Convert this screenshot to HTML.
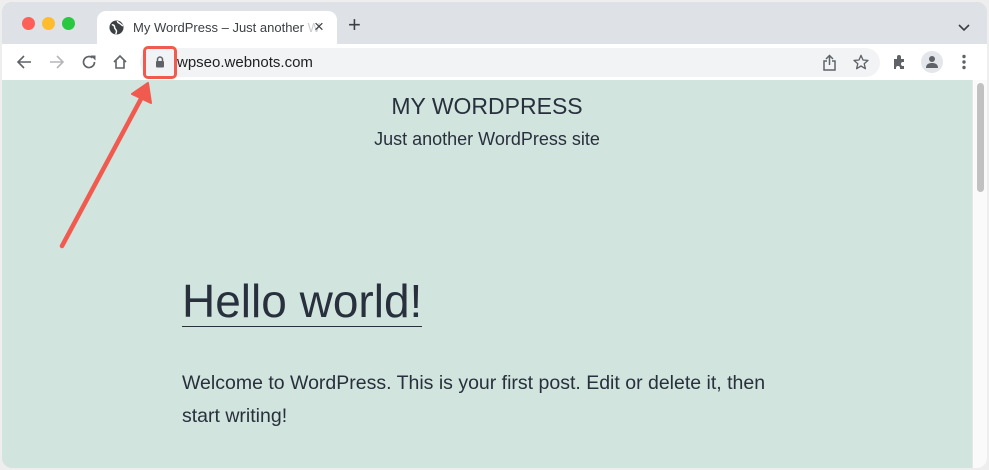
<!DOCTYPE html>
<html><head><meta charset="utf-8"><style>
*{margin:0;padding:0;box-sizing:border-box}
body{width:989px;height:470px;background:#eeeeee;font-family:"Liberation Sans",sans-serif;position:relative;overflow:hidden}
.win{position:absolute;left:2px;top:2px;width:985px;height:466px;border-radius:10px;overflow:hidden;background:#d1e4dd}
.tabbar{position:absolute;left:0;top:0;width:985px;height:42px;background:#dee1e6}
.tab{position:absolute;left:95px;top:9px;width:240px;height:35px;background:#fff;border-radius:9px 9px 0 0}
.dot{position:absolute;top:15px;width:13px;height:13px;border-radius:50%}
.toolbar{position:absolute;left:0;top:42px;width:985px;height:36px;background:#fff}
.omni{position:absolute;left:138px;top:4px;width:740px;height:29px;background:#f1f3f4;border-radius:15px}
.t{position:absolute;white-space:nowrap;color:#28303d}
.sb{position:absolute;left:970px;top:78px;width:15px;height:388px;background:#fafafa;border-left:1px solid #e6e6e6}
.thumb{position:absolute;left:4px;top:3px;width:7px;height:109px;background:#c1c1c1;border-radius:4px}
</style></head><body>
<div class="win">
 <div class="tabbar">
  <div class="dot" style="left:20px;background:#fe5f57"></div>
  <div class="dot" style="left:40px;background:#febc2e"></div>
  <div class="dot" style="left:60px;background:#28c840"></div>
  <div class="tab">
   <svg style="position:absolute;left:12px;top:9px" width="15" height="15" viewBox="0 0 16 16"><circle cx="8" cy="8" r="7.5" fill="#3c4043"/><path d="M3 5c2 0 3 1 3 3s2 2 2 4-1 3-1 3M9 1c0 2 2 2 3 3s2 2 3 2" stroke="#fff" stroke-width="1.6" fill="none"/></svg>
   <div class="t" style="left:36px;top:9px;font-size:13px;color:#3c4043">My WordPress – Just another <span style="color:#ccc">W</span></div>
   <div class="t" style="left:217px;top:6px;font-size:17px;color:#3c4043">×</div>
  </div>
  <div class="t" style="left:346px;top:10px;font-size:22px;color:#3c4043">+</div>
  <svg style="position:absolute;left:956px;top:22px" width="12" height="8" viewBox="0 0 12 8"><path d="M1 1l5 5 5-5" stroke="#3c4043" stroke-width="1.6" fill="none"/></svg>
 </div>
 <div class="toolbar">
  <svg style="position:absolute;left:14px;top:10px" width="16" height="16" viewBox="0 0 16 16"><path d="M15 8H2M8 2L2 8l6 6" stroke="#5f6368" stroke-width="1.6" fill="none"/></svg>
  <svg style="position:absolute;left:47px;top:10px" width="16" height="16" viewBox="0 0 16 16"><path d="M1 8h13M8 2l6 6-6 6" stroke="#b4b6b9" stroke-width="1.6" fill="none"/></svg>
  <svg style="position:absolute;left:79px;top:10px" width="16" height="16" viewBox="0 0 16 16"><path d="M13.5 8A5.5 5.5 0 1 1 11.5 3.8" stroke="#5f6368" stroke-width="1.7" fill="none"/><path d="M9.5 1.5h5v5z" fill="#5f6368"/></svg>
  <svg style="position:absolute;left:110px;top:10px" width="16" height="16" viewBox="0 0 16 16"><path d="M2 8L8 2l6 6M4 6.5V14h8V6.5" stroke="#5f6368" stroke-width="1.6" fill="none"/></svg>
  <div class="omni">
   <svg style="position:absolute;left:15px;top:8px" width="10" height="12" viewBox="0 0 10 12"><path d="M2.5 5V3.5a2.5 2.5 0 0 1 5 0V5" stroke="#5f6368" stroke-width="1.5" fill="none"/><rect x="1" y="5" width="8" height="6.5" rx="1" fill="#5f6368"/></svg>
   <div class="t" style="left:37px;top:6px;font-size:15px;color:#202124">wpseo.webnots.com</div>
   <svg style="position:absolute;left:682px;top:6px" width="15" height="17" viewBox="0 0 15 17"><path d="M7.5 11V1.5M4 5l3.5-3.5L11 5M5 7H2v9h11V7h-3" stroke="#5f6368" stroke-width="1.5" fill="none"/></svg>
   <svg style="position:absolute;left:713px;top:6px" width="16" height="16" viewBox="0 0 24 24"><path d="M12 2l3 7 7.5.6-5.7 5 1.8 7.4L12 18l-6.6 4 1.8-7.4-5.7-5L9 9z" stroke="#5f6368" stroke-width="2" fill="none" stroke-linejoin="round"/></svg>
  </div>
  <svg style="position:absolute;left:890px;top:10px" width="16" height="16" viewBox="0 0 16 16"><path d="M2 5h3V3a2 2 0 0 1 4 0v2h3v3h-1a2 2 0 0 0 0 4h1v3H8v-1a2 2 0 0 0-4 0v1H2z" fill="#5f6368"/></svg>
  <div style="position:absolute;left:919px;top:7px;width:22px;height:22px;border-radius:50%;background:#e3e6ea"></div>
  <svg style="position:absolute;left:923px;top:11px" width="14" height="14" viewBox="0 0 14 14"><circle cx="7" cy="4" r="3" fill="#5f6368"/><path d="M1 13c0-4 3-5 6-5s6 1 6 5z" fill="#5f6368"/></svg>
  <svg style="position:absolute;left:959px;top:10px" width="6" height="16" viewBox="0 0 6 16"><circle cx="3" cy="2.5" r="1.7" fill="#5f6368"/><circle cx="3" cy="8" r="1.7" fill="#5f6368"/><circle cx="3" cy="13.5" r="1.7" fill="#5f6368"/></svg>
 </div>
 <div class="t" style="left:0;width:970px;text-align:center;top:91px;font-size:23px">MY WORDPRESS</div>
 <div class="t" style="left:0;width:970px;text-align:center;top:127px;font-size:18px">Just another WordPress site</div>
 <div class="t" style="left:180px;top:274px;font-size:46px;border-bottom:1.5px solid #28303d;line-height:50px">Hello world!</div>
 <div class="t" style="left:180px;top:365px;font-size:19.5px;line-height:33px">Welcome to WordPress. This is your first post. Edit or delete it, then<br>start writing!</div>
 <div class="sb"><div class="thumb"></div></div>
</div>
<div style="position:absolute;left:143px;top:46px;width:34px;height:33px;border:3px solid #f05a4f;border-radius:5px"></div>
<svg style="position:absolute;left:0;top:0" width="989" height="470"><path d="M62 246L142 97" stroke="#f05a4f" stroke-width="4.5" stroke-linecap="round"/><path d="M148 83L132 94L151 103z" fill="#f05a4f" stroke="#f05a4f" stroke-width="2" stroke-linejoin="round"/></svg>
</body></html>
